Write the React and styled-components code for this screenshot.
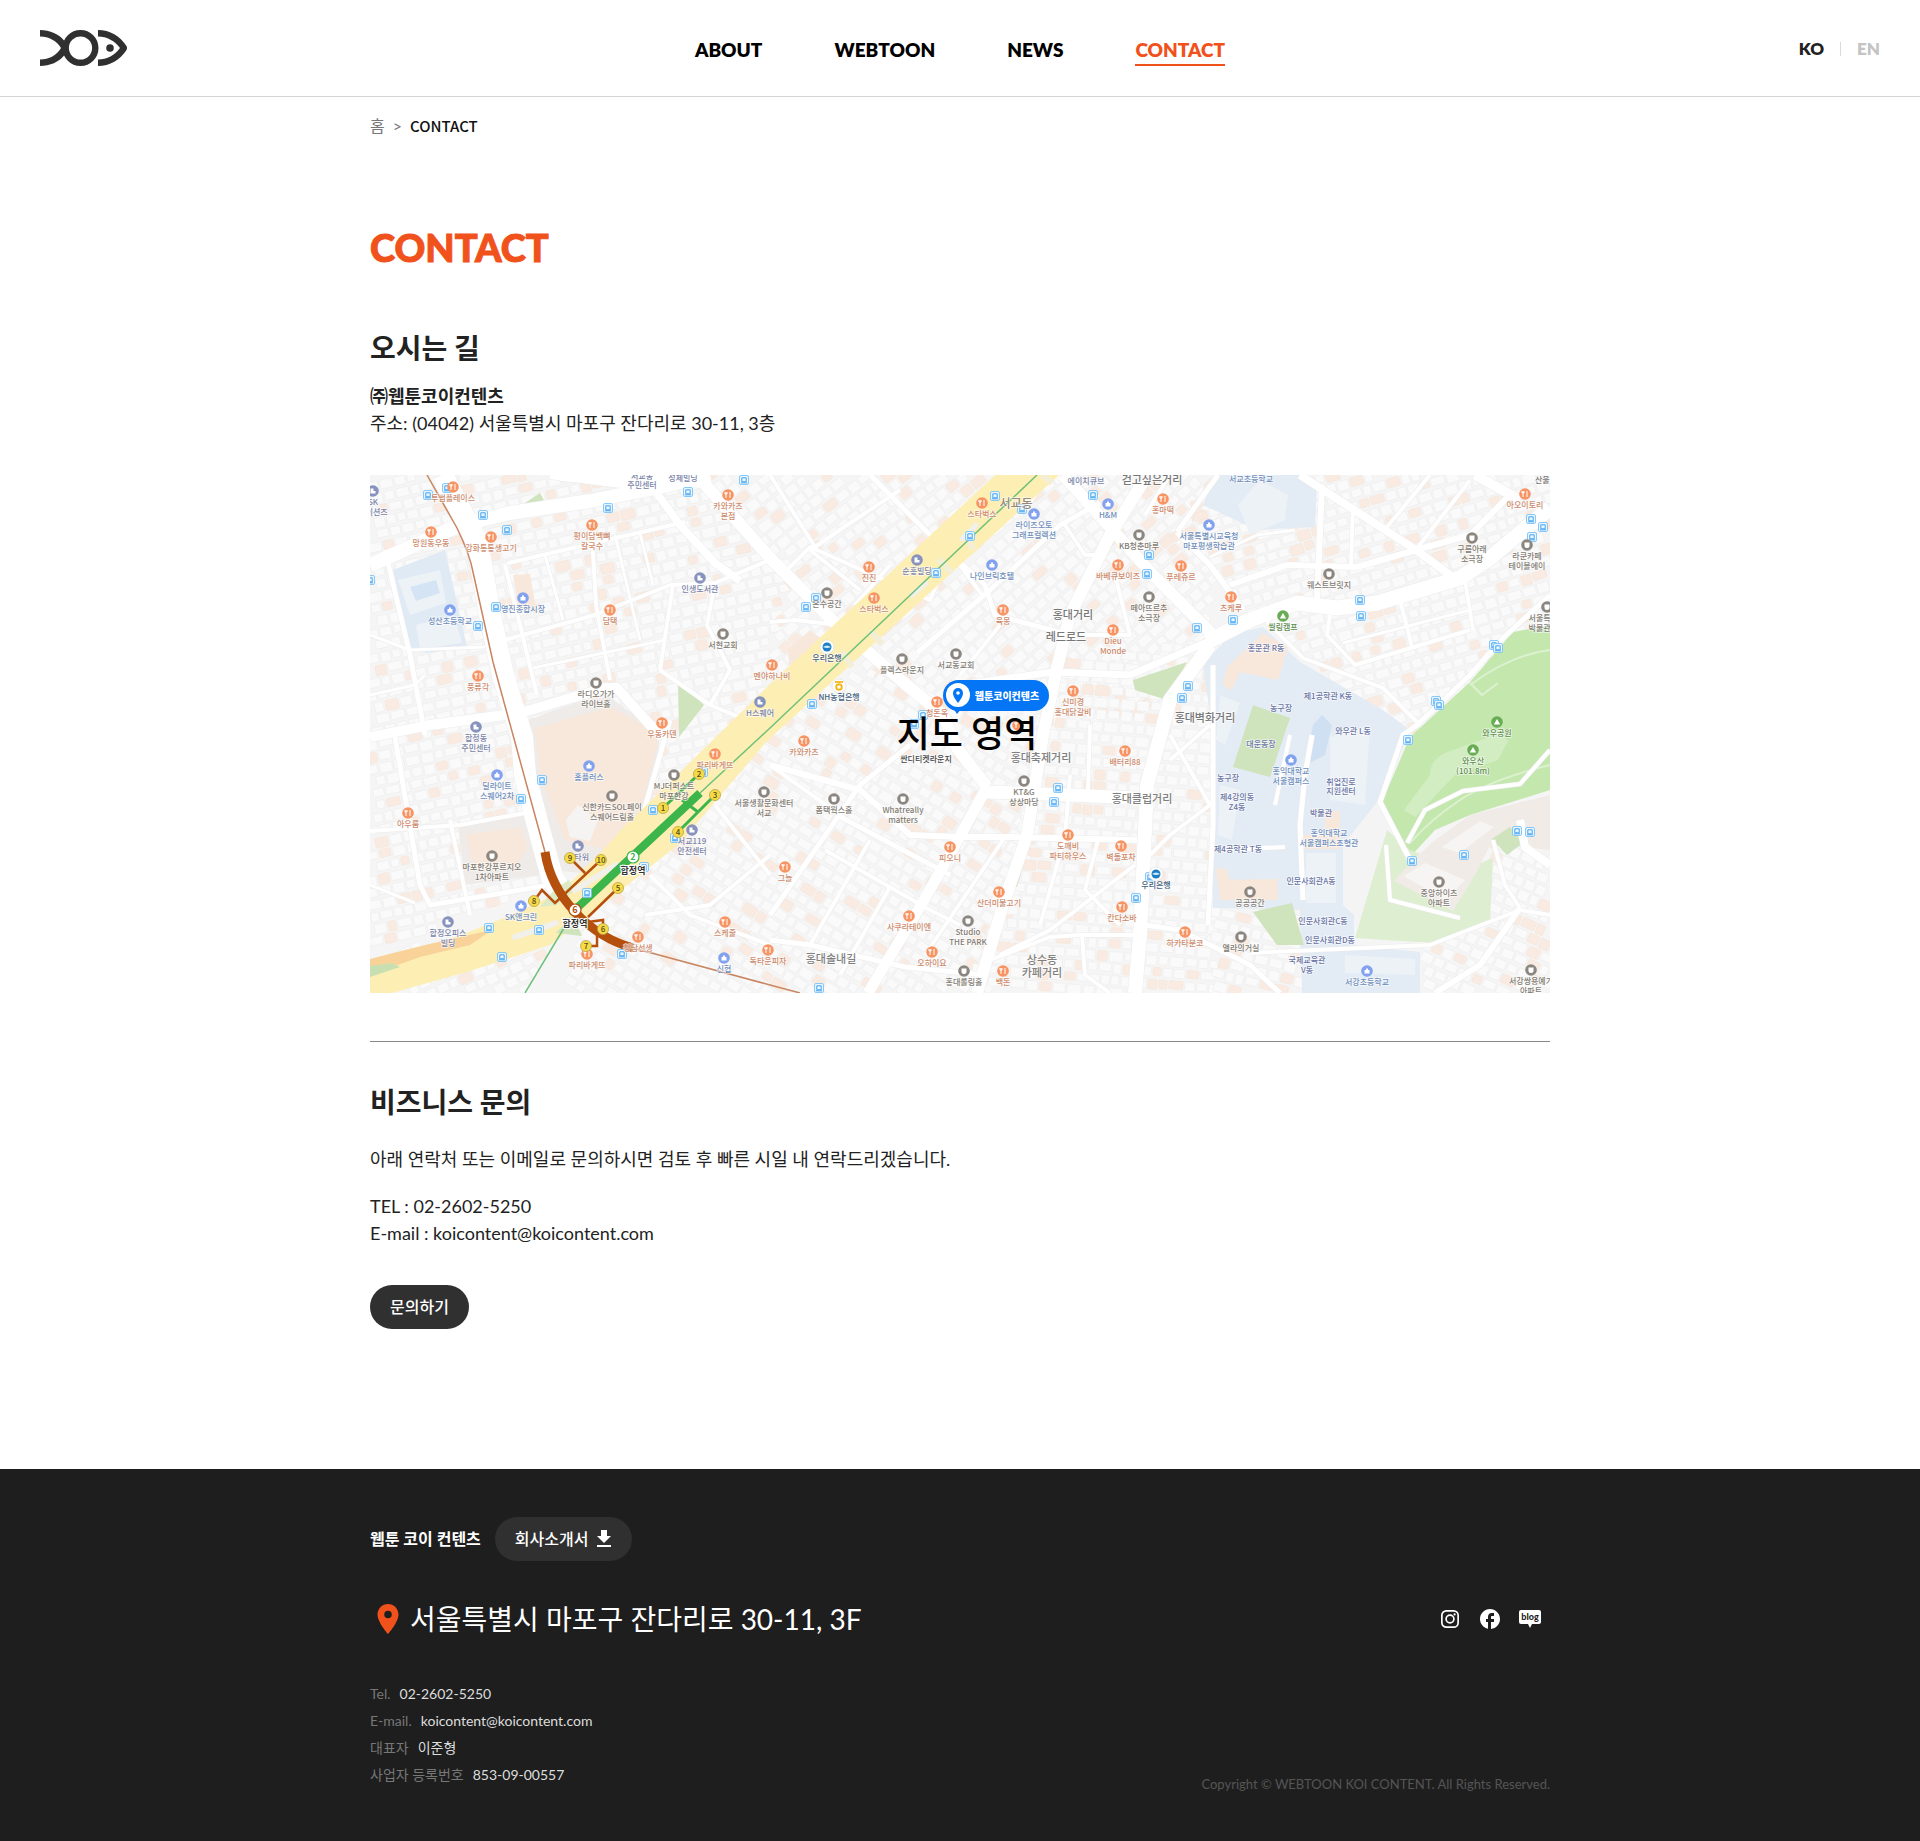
import React from "react";
import styled, { createGlobalStyle } from "styled-components";
import { MdFileDownload, MdLocationOn, MdFacebook } from "react-icons/md";

const FONT = 'Lato, "Noto Sans CJK KR", sans-serif';

const GlobalStyle = createGlobalStyle`
  *, *::before, *::after { box-sizing: border-box; }
  body { margin: 0; background: #fff; color: #222; font-family: ${FONT}; }
  h1, h2, p, dl, dd, ul { margin: 0; padding: 0; }
  ul { list-style: none; }
  a { color: inherit; text-decoration: none; }
`;

/* ---------- header ---------- */

const Header = styled.header`
  display: grid;
  grid-template-columns: 1fr auto 1fr;
  align-items: center;
  height: 97px;
  padding: 0 40px;
  border-bottom: 1px solid #d5d5d5;
`;

const LogoLink = styled.a`
  justify-self: start;
  display: block;
  height: 36px;
`;

const Nav = styled.nav`
  display: flex;
  gap: 72px;
`;

const NavLink = styled.a`
  padding: 8px 0 2px;
  border-bottom: 2px solid ${(p) => (p.$active ? "#f1511b" : "transparent")};
  color: ${(p) => (p.$active ? "#f1511b" : "#000")};
  font-size: 19px;
  line-height: 24px;
  font-weight: 800;
`;

const Languages = styled.div`
  justify-self: end;
  display: flex;
  align-items: center;
  gap: 16px;
  padding-top: 2px;
`;

const LanguageLink = styled.a`
  color: ${(p) => (p.$active ? "#222" : "#c4c4c4")};
  font-size: 17px;
  line-height: 24px;
  font-weight: 800;
`;

const LanguageDivider = styled.span`
  width: 1px;
  height: 14px;
  background: #d9d9d9;
`;

/* ---------- content ---------- */

const Container = styled.div`
  width: 100%;
  max-width: 1220px;
  margin: 0 auto;
  padding: 0 20px;
`;

const Main = styled.main`
  padding-bottom: 140px;
`;

const Breadcrumb = styled.nav`
  display: flex;
  align-items: center;
  gap: 8px;
  padding-top: 17px;
  color: #777;
  font-size: 16px;
  line-height: 24px;
`;

const Current = styled.span`
  color: #111;
  font-family: "Noto Sans CJK KR", sans-serif;
  font-size: 15px;
  font-weight: 500;
`;

const PageTitle = styled.h1`
  margin-top: 84px;
  color: #f1511b;
  font-size: 38px;
  line-height: 50px;
  font-weight: 900;
  -webkit-text-stroke: 1px #f1511b;
`;

const SectionTitle = styled.h2`
  font-size: 28px;
  line-height: 40px;
  font-weight: 700;
`;

const Section = styled.section`
  padding-top: ${(p) => p.$top}px;
`;

const Text = styled.p`
  margin-top: ${(p) => p.$top || 0}px;
  font-size: 18px;
  line-height: 27px;
  font-weight: ${(p) => (p.$bold ? 700 : 400)};
`;

const MapFrame = styled.div`
  display: grid;
  place-items: center;
  height: 518px;
  margin: 38px 0 48px;
  overflow: hidden;
  & > * { grid-area: 1 / 1; }
`;

const MapSvg = styled.svg`
  display: block;
  width: 100%;
  height: 518px;
  font-family: "Noto Sans CJK KR", sans-serif;
`;

const MapCaption = styled.strong`
  margin: 0 0 6px 14px;
  color: #000;
  font-family: "Noto Sans CJK KR", sans-serif;
  font-size: 36px;
  line-height: 52px;
  font-weight: 500;
`;

const Divider = styled.hr`
  height: 1px;
  margin: 0;
  border: 0;
  background: #888;
`;

const Button = styled.button`
  display: inline-flex;
  align-items: center;
  gap: 4px;
  height: 44px;
  margin-top: ${(p) => p.$top || 0}px;
  padding: 0 ${(p) => (p.$icon ? 16 : 20)}px 0 20px;
  border: 0;
  border-radius: 22px;
  background: #303030;
  color: #fff;
  font: 500 16px/24px ${FONT};
  cursor: pointer;
`;

/* ---------- footer ---------- */

const Footer = styled.footer`
  padding: 48px 0 45px;
  background: #1e1e1e;
  color: #fff;
`;

const FooterRow = styled.div`
  display: flex;
  align-items: ${(p) => p.$align || "center"};
  justify-content: ${(p) => (p.$between ? "space-between" : "flex-start")};
  gap: 14px;
  margin-top: ${(p) => p.$top || 0}px;
`;

const CompanyName = styled.strong`
  font-size: 16px;
  line-height: 24px;
  font-weight: 700;
`;

const Address = styled.p`
  display: flex;
  align-items: center;
  gap: 4px;
  font-size: 28px;
  line-height: 40px;
  & > svg { color: #f1511b; }
`;

const SocialList = styled.ul`
  display: flex;
`;

const SocialLink = styled.a`
  display: grid;
  place-items: center;
  width: 40px;
  height: 40px;
`;

const InfoList = styled.dl`
  padding-bottom: 8px;
  font-size: 14px;
  line-height: 27px;
`;

const InfoItem = styled.div`
  display: flex;
  gap: 9px;
`;

const InfoLabel = styled.dt`
  color: #777;
`;

const InfoValue = styled.dd`
  color: #ddd;
`;

const Copyright = styled.p`
  color: #555;
  font-size: 13px;
  line-height: 24px;
`;

/* ---------- drawings ---------- */

const Logo = () => (
  <svg width="87" height="36" viewBox="0 0 87 36" aria-hidden="true">
    <g fill="#303030">
      <path d="M0 0C10 0 19 4 24.500 11L26 18L24.500 25C19 32 10 36 0 36V29.500C9 29.500 17 25 21 18C17 11 9 6.500 0 6.500Z" />
      <path d="M58 0C70 0 80 6 86.500 16Q87.500 18 86.500 20C80 30 70 36 58 36V29.500C67 29.500 75 25 80 18C75 11 67 6.500 58 6.500Z" />
      <circle cx="70" cy="18" r="3.800" />
    </g>
    <circle cx="40.500" cy="18" r="14.800" fill="none" stroke="#303030" strokeWidth="6.400" />
  </svg>
);

const Instagram = () => (
  <svg width="20" height="20" viewBox="0 0 20 20" fill="none" stroke="#fff" strokeWidth="1.700" aria-hidden="true">
    <rect x="1.850" y="1.850" width="16.300" height="16.300" rx="4.500" />
    <circle cx="10" cy="10" r="3.900" />
    <circle cx="14.600" cy="5.400" r="1.100" fill="#fff" stroke="none" />
  </svg>
);

const Blog = () => (
  <svg width="24" height="20" viewBox="0 0 24 20" aria-hidden="true">
    <path d="M3 1H21Q23 1 23 3V13Q23 15 21 15H14L12 19L10 15H3Q1 15 1 13V3Q1 1 3 1Z" fill="#fff" />
    <text x="12" y="11" fill="#1e1e1e" fontSize="9" fontWeight="900" textAnchor="middle">blog</text>
  </svg>
);

/* ---------- map data ---------- */

const BLOCKS = [
  { clip: "0,0 330,0 420,95 390,250 300,330 150,420 0,480", angle: -13, cx: 200, cy: 220, seed: 3 },
  { clip: "330,0 700,0 400,260 390,250 420,95", angle: -38, cx: 500, cy: 100, seed: 11 },
  { clip: "700,0 850,0 840,165 790,240 690,250 600,240 480,190", angle: -42, cx: 700, cy: 130, seed: 7 },
  { clip: "480,190 690,250 620,518 200,518 200,450 400,260", angle: 32, cx: 430, cy: 390, seed: 19 },
  { clip: "690,190 850,160 843,430 850,518 600,518", angle: 5, cx: 740, cy: 380, seed: 23 },
  { clip: "850,0 1180,0 1180,160 1100,210 1040,260 890,150 800,60", angle: -17, cx: 1000, cy: 110, seed: 29 },
  { clip: "843,435 930,435 935,518 843,518", angle: 14, cx: 890, cy: 480, seed: 31 },
  { clip: "1120,360 1180,380 1180,518 1050,518 1050,470 1120,450", angle: 24, cx: 1120, cy: 440, seed: 37 },
  { clip: "0,480 200,440 160,518 0,518", angle: -25, cx: 90, cy: 500, seed: 41 },
];

function buildings({ angle, cx, cy, seed, clip }) {
  let s = seed;
  const rand = () => {
    s = (s * 16807) % 2147483647;
    return s / 2147483647;
  };
  for (let i = 0; i < 5; i += 1) rand();
  const pts = clip.split(" ").map((p) => p.split(",").map(Number));
  const inside = (x, y) => {
    let hit = false;
    for (let i = 0, j = pts.length - 1; i < pts.length; j = i, i += 1) {
      const [xi, yi] = pts[i];
      const [xj, yj] = pts[j];
      if (yi > y !== yj > y && x < ((xj - xi) * (y - yi)) / (yj - yi) + xi) hit = !hit;
    }
    return hit;
  };
  const a = (angle * Math.PI) / 180;
  const out = [];
  for (let v = -300; v < 300; v += 12) {
    for (let u = -320; u < 320; ) {
      const w = 8 + Math.floor(rand() * 7);
      const h = 8 + Math.floor(rand() * 3);
      const warm = rand() > 0.84;
      const x = cx + (u + w / 2) * Math.cos(a) - (v + h / 2) * Math.sin(a);
      const y = cy + (u + w / 2) * Math.sin(a) + (v + h / 2) * Math.cos(a);
      if (inside(x, y) && x > -10 && x < 1190 && y > -10 && y < 528) {
        out.push({ u, v, w, h, warm });
      }
      u += w + 2;
    }
  }
  return out;
}

const CITY = BLOCKS.map((b) => ({ ...b, items: buildings(b) }));

const AREAS = [
  ["#e3ebf4", "893,152 930,187 1013,235 1040,255 1013,320 973,370 973,430 984,440 984,470 1050,477 1050,518 932,518 930,435 843,433 843,350 843,260 833,190 860,160"],
  ["#e3ebf4", "845,0 930,0 947,10 945,52 887,55 833,30"],
  ["#e0eaf4", "23,95 75,75 97,172 57,178 40,172"],
  ["#f4f4f4", "1013,320 973,370 973,430 985,440 987,460 1016,350"],
  ["#c4e7ae", "1180,150 1143,157 1100,207 1040,262 1012,327 1040,382 1065,355 1100,340 1180,315"],
  ["#deeed0", "1017,355 985,463 1063,468 1120,447 1123,383 1093,395 1040,375"],
  ["#f0ebe7", "1024,406 1044,384 1065,365 1100,340 1180,320 1180,375 1155,372 1120,370 1105,400 1083,436"],
  ["#f7f5f3", "1034,401 1055,388 1095,405 1075,425"],
  ["#f7f5f3", "1072,372 1110,346 1124,352 1090,378"],
  ["#cfe3bd", "1122,364 1140,352 1153,368 1137,380"],
  ["#cfe3bd", "140,38 170,18 177,31 145,39"],
  ["#cfe3bd", "308,205 334,230 309,262"],
  ["#cfe3bd", "883,230 920,243 900,302 863,292"],
  ["#cfe3bd", "883,437 922,428 934,470 907,470"],
  ["#cfe3bd", "655,365 660,365 647,412 642,410"],
  ["#cfe3bd", "763,205 817,187 797,225 765,215"],
  ["#efebe8", "158,245 205,228 240,222 290,260 280,345 225,400 185,395 165,310"],
  ["#f8e8dc", "165,253 240,232 290,258 272,330 240,375 195,365 170,300"],
  ["#f6f4f2", "196,345 208,330 228,345 220,366 200,362"],
  ["#efebe8", "88,350 160,340 172,400 95,410"],
  ["#f8e8dc", "96,360 150,352 158,372 148,390 104,394"],
  ["#f8e8dc", "857,192 893,158 918,172 908,205 870,197 862,215 853,210"],
  ["#f8e8dc", "846,394 856,393 860,405 907,404 908,425 850,425"],
  ["#f8e8dc", "929,374 970,374 970,336 955,336 955,360 929,360"],
  ["#f8e8dc", "143,100 160,99 166,133 150,137"],
  ["#f8e8dc", "418,175 440,155 472,180 440,215 420,205"],
  ["#edf2f7", "880,60 868,30 890,5 918,20 915,45"],
  ["#edf2f7", "28,105 70,95 76,128 40,140"],
  ["#d5e4f5", "40,112 66,105 70,118 46,126"],
  ["#edf2f7", "46,150 84,140 92,168 50,174"],
  ["#edf2f7", "960,262 1000,250 995,330 960,325"],
  ["#edf2f7", "936,378 966,378 966,428 936,428"],
  ["#edf2f7", "850,310 870,315 862,365 848,360"],
  ["#edf2f7", "975,480 1045,484 1045,500 975,498"],
  ["#edf2f7", "850,220 870,228 855,270 846,265"],
  ["#d0e0f3", "943,250 952,240 962,250 955,280 936,290"],
];

const ROADS = [
  [14, "0,90 90,50 140,38 220,26 290,12 340,0"],
  [22, "72,0 107,67 120,140 133,200 152,262 155,300 167,347 182,402 200,430"],
  [10, "0,262 60,250 150,238 235,213 247,213 280,250 292,262"],
  [8, "180,0 283,13 310,50 345,88 370,106"],
  [12, "190,0 333,7 400,83 467,150 533,207 573,240 587,273 617,312"],
  [13, "617,317 700,320 767,323"],
  [11, "617,312 585,370 553,427 513,493 498,518"],
  [15, "837,167 880,145 927,128 967,133 1007,128 1090,103 1120,83 1180,33"],
  [14, "840,170 800,225 777,310 773,400 770,460 765,518"],
  [12, "693,0 783,100 843,160"],
  [12, "773,7 740,60 700,140 687,193 673,260 657,360 633,430 607,518"],
  [7, "590,210 683,197 760,200 837,167"],
  [8, "930,0 1043,73 1080,100"],
  [10, "1105,0 1150,25"],
  [6, "952,10 947,125"],
  [6, "860,110 917,90 987,92 1053,73 1100,60 1140,20"],
  [6, "807,57 840,90 873,135"],
  [5, "807,57 848,0"],
  [4, "897,147 933,183 1013,213 1047,247"],
  [5, "1180,120 1133,163 1100,200 1047,250 1033,260 1010,327 1040,385"],
  [4, "1037,368 1055,335 1093,316 1150,309 1180,275"],
  [4, "983,30 981,92"], [4, "1017,52 1060,0"], [4, "1048,72 1100,5"], [3, "925,55 887,60 840,82"],
  [4, "960,140 957,160 985,190 1100,155"], [4, "1030,125 1042,172"], [4, "1095,105 1103,155"], [3, "973,168 1100,135"],
  [3, "0,160 40,175 115,172"], [5, "15,75 40,180 55,260"], [4, "135,90 150,150 167,220"], [4, "138,88 315,47"],
  [4, "222,60 226,130 240,205"], [4, "135,165 225,140 300,110 345,108 400,85"], [3, "175,80 193,145"],
  [4, "303,110 290,195"], [3, "245,60 270,165"], [3, "270,58 283,110"], [3, "163,193 295,165"],
  [4, "290,195 340,230 400,255"], [4, "345,108 337,150 360,195 340,230"],
  [4, "0,356 90,350 155,338"], [5, "25,262 50,410 60,430 180,410"], [3, "0,220 45,210 55,200"],
  [4, "80,345 100,440"], [3, "0,410 45,428"],
  [4, "400,0 445,72 480,48 530,15"], [4, "412,100 440,72 560,125 575,90"], [5, "500,0 555,55 615,110 625,140 700,160"],
  [5, "547,178 620,115 690,50 730,28"], [4, "440,75 490,115"], [4, "485,130 520,90"], [4, "400,147 425,145 468,150"],
  [4, "612,120 590,90 555,55"], [4, "695,50 715,80 735,80"], [4, "745,100 760,160 700,160"],
  [4, "630,150 590,200"], [4, "680,0 650,40"], [4, "800,0 775,40"],
  [6, "400,290 490,315 540,360 590,362 640,362 767,365"], [5, "467,340 580,400"], [5, "400,465 440,470 535,492 615,500"],
  [5, "540,270 490,310 400,440"], [4, "455,375 560,435 590,450"], [4, "500,365 440,470"], [4, "520,412 470,500"],
  [4, "635,362 555,480"], [4, "700,300 695,362 670,450"], [4, "765,390 680,455 630,480"],
  [4, "620,485 680,462 710,460 768,460"], [4, "728,365 715,415 750,450"], [4, "712,460 715,500 740,518"],
  [4, "720,250 718,315"], [4, "400,290 470,340"], [4, "800,260 840,330 800,360 780,380"],
  [4, "400,380 340,430 275,440"], [4, "345,330 400,400"], [4, "280,400 320,440 400,470"],
  [5, "300,245 270,350"], [5, "843,190 843,350 838,450"], [5, "775,450 810,455 880,490 910,518"],
  [4, "840,250 800,285"], [5, "942,260 935,300 930,350 933,425"], [4, "920,260 905,330"], [4, "850,375 915,372"],
  [4, "880,478 1060,470 1150,435 1180,440"], [4, "1016,370 1020,425 1090,443"], [4, "1123,365 1135,410 1150,433"],
  [6, "1150,433 1110,490 1065,518"], [8, "1150,345 1155,372 1180,390"],
];

const BUS = [
  [58, 20], [77, 13], [113, 40], [137, 55], [238, 33], [318, 17], [374, 5], [126, 132], [108, 151], [0, 105],
  [625, 21], [600, 61], [652, 34], [566, 98], [446, 123], [436, 132], [442, 229], [553, 240], [544, 249],
  [723, 20], [779, 80], [777, 99], [990, 125], [991, 141], [1161, 44], [1173, 52], [1162, 62], [863, 145], [827, 153],
  [818, 211], [812, 223], [1124, 170], [1128, 173], [1066, 226], [1069, 230], [1038, 265], [172, 305], [151, 324],
  [283, 335], [305, 363], [274, 392], [217, 418], [119, 453], [169, 455], [132, 482], [252, 479], [688, 313], [684, 327],
  [780, 402], [766, 423], [1042, 386], [1147, 356], [1160, 357], [1094, 380], [449, 513], [333, 297],
];

/* x, y of the marker, kind, label lines */
const PLACES = [
  [83, 12, "food", "투썸플레이스"], [61, 57, "food", "망원동우동"], [121, 62, "food", "강화통통생고기"],
  [222, 50, "food", "평이담백뼈|칼국수"], [358, 20, "food", "카와카츠|본점"], [240, 135, "food", "담택"],
  [108, 201, "food", "풍류각"], [292, 248, "food", "우동카덴"], [402, 190, "food", "멘야하나비"],
  [38, 338, "food", "아우룸"], [345, 279, "food", "파리바게뜨"], [268, 462, "food", "청담선생"],
  [217, 479, "food", "파리바게뜨"], [355, 447, "food", "스케줄"], [398, 475, "food", "독타운피자"],
  [612, 28, "food", "스타벅스"], [499, 92, "food", "진진"], [504, 123, "food", "스타벅스"], [633, 135, "food", "육몽"],
  [748, 90, "food", "바베큐보이즈"], [743, 155, "food", "Dieu|Monde"], [703, 216, "food", "신미경|홍대닭갈비"],
  [567, 227, "food", "청돈옥"], [793, 24, "food", "홍마떡"], [811, 91, "food", "푸레쥬르"], [861, 122, "food", "츠케루"],
  [1155, 19, "food", "아오이토리"], [434, 266, "food", "카와카츠"], [755, 276, "food", "배터리88"],
  [580, 372, "food", "피오니"], [698, 360, "food", "도깨비|파티하우스"], [751, 371, "food", "벽돌포차"],
  [415, 392, "food", "그늘"], [629, 417, "food", "산더미불고기"], [539, 441, "food", "사쿠라테이엔"],
  [752, 432, "food", "칸다소바"], [562, 477, "food", "오하이요"], [633, 496, "food", "백돈"], [815, 457, "food", "하카타분코"],
  [648, 250, "food", ""],
  [80, 135, "blue", "성산초등학교"], [153, 123, "blue", "영진종합시장"], [664, 39, "blue", "라이즈오토|그래프컬렉션"],
  [622, 90, "blue", "나인브릭호텔"], [738, 29, "blue", "H&M"], [839, 50, "blue", "서울특별시교육청|마포평생학습관"],
  [127, 300, "blue", "딜라이트|스퀘어2차"], [219, 291, "blue", "홈플러스"], [151, 431, "blue", "SK앤크린"],
  [354, 483, "blue", "신협"], [921, 285, "blue", "홍익대학교|서울캠퍼스"], [997, 496, "blue", "서강초등학교"],
  [330, 103, "slate", "인생도서관"], [547, 85, "slate", "순흥빌딩"], [390, 227, "slate", "H스퀘어"],
  [106, 252, "slate", "합정동|주민센터"], [208, 371, "slate", "마타워"], [322, 355, "slate", "서교119|안전센터"],
  [78, 447, "slate", "합정오피스|빌딩"], [3, 16, "slate", "SK|케이션즈"],
  [353, 159, "dark", "서현교회"], [226, 208, "dark", "라디오가가|라이브홀"], [457, 118, "dark", "온수공간"],
  [532, 184, "dark", "플렉스라운지"], [586, 179, "dark", "서교동교회"], [769, 60, "dark", "KB청춘마루"],
  [779, 122, "dark", "떼아뜨르추|소극장"], [959, 99, "dark", "웨스트브릿지"], [1102, 63, "dark", "구름아래|소극장"],
  [1157, 70, "dark", "라쿤카페|테이블에이"], [1177, 132, "dark", "서울특별시|박물관협회"], [304, 300, "dark", "MJ더퍼스트|마포한강"],
  [242, 321, "dark", "신한카드SOL페이|스퀘어드림홀"], [394, 317, "dark", "서울생활문화센터|서교"],
  [122, 381, "dark", "마포한강푸르지오|1차아파트"], [464, 324, "dark", "폼택웍스홀"], [533, 324, "dark", "Whatreally|matters"],
  [654, 306, "dark", "KT&G|상상마당"], [598, 446, "dark", "Studio|THE PARK"], [594, 496, "dark", "홍대롤링홀"],
  [880, 417, "dark", "공공공간"], [871, 462, "dark", "앨라의거실"], [1069, 407, "dark", "중앙하이츠|아파트"],
  [1161, 495, "dark", "서강쌍용예가|아파트"],
  [913, 141, "green", "씰링캠프"], [1127, 247, "green", "와우공원"], [1103, 275, "green", "와우산|(101.8m)"],
  [457, 172, "bank", "우리은행"], [469, 211, "farm", "NH농협은행"], [786, 399, "bank", "우리은행"],
];

const KINDS = {
  food: ["#f79463", "#cd8b6d"],
  blue: ["#82a1ee", "#6f8fbd"],
  slate: ["#8793bd", "#7a83a8"],
  dark: ["#8c8680", "#827b73"],
  green: ["#69ac55", "#5e8e50"],
  bank: ["#fff", "#43617e"],
  farm: ["#fff", "#43617e"],
};

/* x, centre y, size, colour, text */
const NAMES = [
  [646, 29, 12, "#94897c", "서교동"], [703, 140, 11, "#777", "홍대거리"], [696, 162, 11, "#777", "레드로드"],
  [782, 5, 11, "#777", "걷고싶은거리"], [835, 243, 11, "#777", "홍대벽화거리"], [671, 283, 11, "#808080", "홍대축제거리"],
  [772, 324, 11, "#808080", "홍대클럽거리"], [461, 484, 11, "#808080", "홍대솔내길"], [672, 485, 11, "#808080", "상수동"],
  [672, 498, 11, "#808080", "카페거리"], [272, 1, 8, "#7a83a8", "서교동"], [272, 10, 8, "#7a83a8", "주민센터"],
  [313, 3, 8, "#7a83a8", "성제빌딩"], [716, 6, 8, "#7a83a8", "에이치큐브"], [881, 4, 8, "#6f8fbd", "서교초등학교"],
  [1176, 5, 8, "#777", "산울림"], [896, 173, 8, "#6a75a5", "홍문관 R동"], [958, 221, 8, "#6a75a5", "제1공학관 K동"],
  [911, 233, 8, "#6a75a5", "농구장"], [983, 256, 8, "#6a75a5", "와우관 L동"], [891, 269, 8, "#6a75a5", "대운동장"],
  [858, 303, 8, "#6a75a5", "농구장"], [867, 322, 8, "#6a75a5", "제4강의동"], [867, 332, 8, "#6a75a5", "Z4동"],
  [868, 374, 8, "#6a75a5", "제4공학관 T동"], [971, 307, 8, "#6a75a5", "취업진로"], [971, 316, 8, "#6a75a5", "지원센터"],
  [951, 338, 8, "#6a75a5", "박물관"], [959, 358, 8, "#6f8fbd", "홍익대학교"], [959, 368, 8, "#6f8fbd", "서울캠퍼스조형관"],
  [941, 406, 8, "#6a75a5", "인문사회관A동"], [953, 446, 8, "#6a75a5", "인문사회관C동"], [960, 465, 8, "#6a75a5", "인문사회관D동"],
  [937, 485, 8, "#6a75a5", "국제교육관"], [937, 495, 8, "#6a75a5", "V동"], [556, 284, 8, "#444", "싼디티켓라운지"],
];

const EXITS = [
  [293, 333, 1], [329, 299, 2], [345, 320, 3], [308, 357, 4], [248, 413, 5], [233, 454, 6], [216, 471, 7],
  [164, 426, 8], [200, 383, 9], [231, 385, 10],
];

const Marker = ({ kind }) => {
  if (kind === "bank") {
    return (
      <>
        <circle r="7" fill="#fff" stroke="#d5d5d5" strokeWidth="0.500" />
        <circle r="4.500" fill="#1c7ec5" />
        <path d="M-4 0Q0 -3 4 0Q0 2 -4 0Z" fill="#cfeaf9" />
      </>
    );
  }
  if (kind === "farm") {
    return (
      <>
        <circle r="7" fill="#fff" stroke="#d5d5d5" strokeWidth="0.500" />
        <circle cy="1" r="2.800" fill="none" stroke="#f5b81c" strokeWidth="2" />
        <path d="M-4 -4H4" stroke="#f5b81c" strokeWidth="1.800" />
      </>
    );
  }
  return (
    <>
      <circle r="5.800" fill={KINDS[kind][0]} />
      {kind === "food" && <path d="M-2 -3V3M2 -3V3M-3 -3V-1H-1V-3" stroke="#fff" strokeWidth="1" fill="none" />}
      {kind === "blue" && <path d="M-2.500 -1H2.500V2.500H-2.500ZM-1 -1V-2.500H1V-1" fill="#fff" />}
      {kind === "slate" && <path d="M-2.500 2.500V-2.500H0.500V0H2.500V2.500Z" fill="#fff" />}
      {kind === "dark" && <path d="M-2.500 -2.500H2.500V0.500Q2.500 3 0 3T-2.500 0.500Z" fill="#fff" />}
      {kind === "green" && <path d="M0 -3L3.200 2.500H-3.200Z" fill="#fff" />}
    </>
  );
};

const MapDrawing = () => (
  <MapSvg viewBox="0 0 1180 518" preserveAspectRatio="xMidYMid slice" role="img" aria-label="약도">
    <rect width="1180" height="518" fill="#f5f5f5" />
    {CITY.map((block) => (
      <g key={block.seed} transform={`translate(${block.cx} ${block.cy}) rotate(${block.angle})`} strokeWidth="0.600">
        {block.items.map((b, i) => (
          <rect
            key={i}
            x={b.u}
            y={b.v}
            width={b.w}
            height={b.h}
            rx="1"
            fill={b.warm ? "#f9ebe1" : "#fafafa"}
            stroke={b.warm ? "#f5e5d9" : "#ededed"}
          />
        ))}
      </g>
    ))}
    {AREAS.map(([fill, points]) => (
      <polygon key={points} points={points} fill={fill} />
    ))}
    <path d="M1060 300Q1060 285 1075 278L1130 258L1138 266L1128 285L1085 300L1045 342L1034 335Z" fill="#d3edc2" />
    <path d="M1100 208L1112 220L1128 208M1180 175Q1140 180 1100 210M1040 368Q1060 345 1090 325T1180 290" fill="none" stroke="#dcf1cf" strokeWidth="2" />
    <g fill="none" stroke="#ececec" strokeLinejoin="round">
      {ROADS.map(([w, points]) => <polyline key={points} points={points} strokeWidth={w + 1} />)}
    </g>
    <g fill="none" stroke="#fff" strokeLinejoin="round">
      {ROADS.map(([w, points]) => <polyline key={points} points={points} strokeWidth={w} />)}
    </g>

    <path d="M636 -10L397 212L255 351Q222 388 190 417Q130 447 62 470L0 490V518H22L100 496L180 470L220 440L310 368L397 266L700 -10Z" fill="#fdeeb3" />
    <path d="M0 484Q60 468 122 455L100 470L50 482L0 500Z" fill="#f9d29a" />
    <path d="M0 491L22 488L30 492L0 502Z" fill="#c8dfb2" />
    <path d="M170 432L185 414L199 405L205 415L187 430Z" fill="#dcebc5" />
    <path d="M203 440L212 461L186 458Z" fill="#cfe3bd" />
    <path d="M145 462L186 448M205 415L246 390" stroke="#f1f0ea" strokeWidth="6" strokeLinecap="round" />
    <path d="M472 177L482 192M500 156L512 169M568 84L582 98M595 62L604 74M672 0L682 8" stroke="#f3eed6" strokeWidth="6" />
    <path d="M592 64L606 50M542 120L556 108" stroke="#f1f0ea" strokeWidth="5" strokeLinecap="round" />

    <g fill="none">
      <path d="M667 0L400 253L330 318M200 443L155 518" stroke="#6fc17a" strokeWidth="1.500" />
      <path d="M57 0L87 53Q100 80 103 97L123 187L143 260L175 377M263 473L400 510L430 518" stroke="#c98562" strokeWidth="1.500" />
      <path d="M330 318L207 433" stroke="#3cb54a" strokeWidth="8" />
      <path d="M293 333L329 299M345 320L308 357M312 325L328 337" stroke="#3cb54a" strokeWidth="3" />
      <path d="M175 377Q180 410 205 437T263 473" stroke="#b54f0e" strokeWidth="9" />
      <path d="M164 426L172 415L185 428L231 385M200 383L215 398M218 442L248 413M218 447L233 445V454M227 452V471H216" stroke="#b54f0e" strokeWidth="2.500" />
    </g>

    {BUS.map(([x, y]) => (
      <g key={`${x}-${y}`} transform={`translate(${x} ${y})`}>
        <rect x="-4.500" y="-4.500" width="9" height="9" rx="1.500" fill="#eaf6ff" stroke="#6cbcf7" strokeWidth="0.800" />
        <path d="M-2.200 1.800V-2.200H2.200V1.800ZM-3 2.800H3" fill="none" stroke="#45a4ef" strokeWidth="1" />
      </g>
    ))}

    {PLACES.map(([x, y, kind, label]) => (
      <g key={`${x}-${y}`} transform={`translate(${x} ${y})`}>
        <Marker kind={kind} />
        <text
          fontSize="8"
          fontWeight="500"
          textAnchor="middle"
          fill={KINDS[kind][1]}
          stroke="#fff"
          strokeWidth="1.500"
          strokeOpacity="0.700"
          paintOrder="stroke"
        >
          {label.split("|").map((line, i) => (
            <tspan key={line} x="0" y={14 + i * 10}>{line}</tspan>
          ))}
        </text>
      </g>
    ))}

    {NAMES.map(([x, y, size, fill, label]) => (
      <text
        key={`${x}-${y}`}
        x={x}
        y={y + Math.round(size / 3)}
        fontSize={size}
        fontWeight="500"
        textAnchor="middle"
        fill={fill}
        stroke="#fff"
        strokeWidth="1.500"
        strokeOpacity="0.700"
        paintOrder="stroke"
      >
        {label}
      </text>
    ))}

    {EXITS.map(([x, y, n]) => (
      <g key={n}>
        <circle cx={x} cy={y} r="5.500" fill="#f7db45" stroke="#b7a24a" strokeWidth="0.800" />
        <text x={x} y={y + 3} fontSize="8" fontWeight="500" textAnchor="middle" fill="#554b1d">{n}</text>
      </g>
    ))}
    {[[263, 382, "2", "#3cb54a"], [205, 435, "6", "#b54f0e"]].map(([x, y, n, c]) => (
      <g key={n}>
        <circle cx={x} cy={y} r="6" fill="#fff" stroke={c} strokeWidth="1.200" />
        <text x={x} y={y + 3} fontSize="9" fontWeight="700" textAnchor="middle" fill={c}>{n}</text>
        <text x={x} y={y + 17} fontSize="9" fontWeight="700" textAnchor="middle" fill="#333" stroke="#fff" strokeWidth="2" paintOrder="stroke">합정역</text>
      </g>
    ))}

    <g>
      <path d="M583 233L587 239L592 233Z" fill="#0475f4" />
      <rect x="573" y="205" width="106" height="31" rx="15.500" fill="#0475f4" />
      <circle cx="588" cy="220" r="12" fill="#fff" />
      <path d="M588 228C584 223 583 220 583 218A5 5 0 0 1 593 218C593 220 592 223 588 228Z" fill="#0475f4" />
      <circle cx="588" cy="218" r="1.800" fill="#fff" />
      <text x="637" y="225" fontSize="10" fontWeight="900" textAnchor="middle" fill="#fff">웹툰코이컨텐츠</text>
    </g>
  </MapSvg>
);

/* ---------- page ---------- */

const MENU = ["ABOUT", "WEBTOON", "NEWS", "CONTACT"];

const INFO = [
  ["Tel.", "02-2602-5250"],
  ["E-mail.", "koicontent@koicontent.com"],
  ["대표자", "이준형"],
  ["사업자 등록번호", "853-09-00557"],
];

const SOCIAL = [
  ["Instagram", <Instagram key="i" />],
  ["Facebook", <MdFacebook key="f" size={24} />],
  ["Blog", <Blog key="b" />],
];

export default function App() {
  return (
    <>
      <GlobalStyle />
      <Header>
        <LogoLink href="#" aria-label="KOI"><Logo /></LogoLink>
        <Nav>
          {MENU.map((item) => (
            <NavLink key={item} href="#" $active={item === "CONTACT"}>{item}</NavLink>
          ))}
        </Nav>
        <Languages>
          <LanguageLink href="#" $active>KO</LanguageLink>
          <LanguageDivider />
          <LanguageLink href="#">EN</LanguageLink>
        </Languages>
      </Header>

      <Main>
        <Container>
          <Breadcrumb>
            <a href="#">홈</a>
            <span>&gt;</span>
            <Current>CONTACT</Current>
          </Breadcrumb>
          <PageTitle>CONTACT</PageTitle>

          <Section $top={56}>
            <SectionTitle>오시는 길</SectionTitle>
            <Text $top={15} $bold>㈜웹툰코이컨텐츠</Text>
            <Text>주소: (04042) 서울특별시 마포구 잔다리로 30-11, 3층</Text>
            <MapFrame>
              <MapDrawing />
              <MapCaption>지도 영역</MapCaption>
            </MapFrame>
          </Section>

          <Divider />

          <Section $top={40}>
            <SectionTitle>비즈니스 문의</SectionTitle>
            <Text $top={24}>아래 연락처 또는 이메일로 문의하시면 검토 후 빠른 시일 내 연락드리겠습니다.</Text>
            <Text $top={20}>TEL : 02-2602-5250</Text>
            <Text>E-mail : koicontent@koicontent.com</Text>
            <Button type="button" $top={38}>문의하기</Button>
          </Section>
        </Container>
      </Main>

      <Footer>
        <Container>
          <FooterRow>
            <CompanyName>웹툰 코이 컨텐츠</CompanyName>
            <Button type="button" $icon>
              회사소개서
              <MdFileDownload size={24} />
            </Button>
          </FooterRow>
          <FooterRow $top={38} $between>
            <Address>
              <MdLocationOn size={36} />
              서울특별시 마포구 잔다리로 30-11, 3F
            </Address>
            <SocialList>
              {SOCIAL.map(([name, icon]) => (
                <li key={name}>
                  <SocialLink href="#" aria-label={name}>{icon}</SocialLink>
                </li>
              ))}
            </SocialList>
          </FooterRow>
          <FooterRow $top={41} $between $align="flex-end">
            <InfoList>
              {INFO.map(([label, value]) => (
                <InfoItem key={label}>
                  <InfoLabel>{label}</InfoLabel>
                  <InfoValue>{value}</InfoValue>
                </InfoItem>
              ))}
            </InfoList>
            <Copyright>Copyright © WEBTOON KOI CONTENT. All Rights Reserved.</Copyright>
          </FooterRow>
        </Container>
      </Footer>
    </>
  );
}
